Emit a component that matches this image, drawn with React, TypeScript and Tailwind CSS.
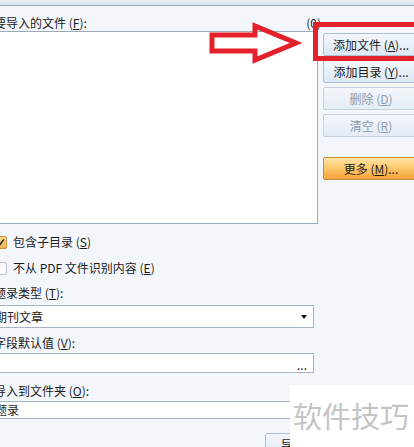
import React from "react";

type BtnProps = {
  children: React.ReactNode;
  disabled?: boolean;
  orange?: boolean;
  className?: string;
};

function DlgButton({ children, disabled, orange, className = "" }: BtnProps) {
  const tone = orange
    ? "border-[#c98d3e] bg-linear-to-b from-[#fde3a6] via-[#fbc768] to-[#f5a23c] text-[#1c1c1c]"
    : disabled
      ? "border-[#c5d1de] bg-linear-to-b from-[#f4f7fb] to-[#e4ecf5] text-[#8d9cb0]"
      : "border-[#b0c0d3] bg-linear-to-b from-[#f3f7fc] to-[#dde8f4] text-[#1c1c1c]";
  return (
    <div
      className={`flex h-[23px] w-[96px] items-center justify-center rounded-[2px] border ${tone} ${className}`}
    >
      {children}
    </div>
  );
}

function Label({ children, className = "" }: { children: React.ReactNode; className?: string }) {
  return <div className={`h-[16px] whitespace-nowrap ${className}`}>{children}</div>;
}

export default function App() {
  return (
    <div className="relative h-[447px] w-[414px] overflow-hidden bg-[#f3f7fc] font-['Noto_Sans_CJK_SC',sans-serif] text-[12px] leading-[16px] text-[#1c1c1c]">
      <div className="h-[6px] border-b border-[#a3adb9] bg-linear-to-b from-[#eaf0f7] to-[#d7e2ef]" />

      <div className="-ml-[6px] flex">
        {/* left column */}
        <div className="flex w-[324px] shrink-0 flex-col">
          <div className="mt-[9px] flex h-[16px] justify-between">
            <span>
              要导入的文件 (<u>F</u>):
            </span>
            <span className="-mr-[3px]">(0)</span>
          </div>
          <div className="h-[193px] border border-[#9ea9b6] bg-white" />

          <div className="mt-[10px] flex h-[16px] items-center gap-[6px]">
            <div className="flex h-[13px] w-[13px] items-center justify-center rounded-[2px] border border-[#c9923a] bg-linear-to-b from-[#fbd98c] to-[#f2b54f]">
              <svg width="9" height="9" viewBox="0 0 9 9">
                <path d="M1.5 4.8 L3.6 7 L7.8 1.6" fill="none" stroke="#2a2a2a" strokeWidth="1.6" />
              </svg>
            </div>
            <span>
              包含子目录 (<u>S</u>)
            </span>
          </div>

          <div className="mt-[10px] flex h-[16px] items-center gap-[6px]">
            <div className="h-[13px] w-[13px] rounded-[2px] border border-[#b9c4d0] bg-linear-to-b from-[#f1f4f8] to-white" />
            <span>
              不从 PDF 文件识别内容 (<u>E</u>)
            </span>
          </div>

          <Label className="mt-[9px]">
            题录类型 (<u>T</u>):
          </Label>
          <div className="mt-[4px] flex h-[23px] w-[320px] items-center justify-between border border-[#a7b5c3] bg-white pr-[6px]">
            <span>期刊文章</span>
            <svg width="6" height="4" viewBox="0 0 6 4">
              <path d="M0 0 H6 L3 4 Z" fill="#111" />
            </svg>
          </div>

          <Label className="mt-[7px]">
            字段默认值 (<u>V</u>):
          </Label>
          <div className="mt-[2px] flex h-[20px] w-[320px] items-end justify-end border border-[#a7b5c3] bg-white pr-[6px]">
            <span className="leading-[14px]">...</span>
          </div>

          <Label className="mt-[10px]">
            导入到文件夹 (<u>O</u>):
          </Label>
          <div className="mt-[2px] flex h-[18px] w-[320px] items-center border border-[#a7b5c3] bg-white">
            <span>题录</span>
          </div>

          <div className="ml-[271px] mt-[14px] flex h-[24px] w-[72px] items-center rounded-[2px] border border-[#b0c0d3] bg-linear-to-b from-[#f3f7fc] to-[#dde8f4] pl-[15px]">
            导入
          </div>
        </div>

        {/* right column */}
        <div className="ml-[5px] flex shrink-0 flex-col gap-[4px] pt-[27px]">
          <DlgButton>
            添加文件 (<u>A</u>)...
          </DlgButton>
          <DlgButton>
            添加目录 (<u>Y</u>)...
          </DlgButton>
          <DlgButton disabled>
            删除 (<u>D</u>)
          </DlgButton>
          <DlgButton disabled>
            清空 (<u>R</u>)
          </DlgButton>
          <DlgButton orange className="mt-[16px] h-[22px]">
            更多 (<u>M</u>)...
          </DlgButton>
        </div>
      </div>

      {/* red annotation */}
      <div className="absolute left-[313px] top-[22px] h-[39px] w-[110px] border-[5px] border-[#e3212b]" />
      <svg className="absolute left-0 top-0" width="414" height="80" viewBox="0 0 414 80">
        <polygon
          points="212,35 255,35 255,26 296,43 255,60 255,51 212,51"
          fill="none"
          stroke="#e3212b"
          strokeWidth="5"
          strokeLinejoin="miter"
        />
      </svg>

      {/* watermark */}
      <div className="absolute left-[290px] top-[385px] h-[62px] w-[124px] bg-white pl-[3px] pt-[15px]">
        <div className="text-[29px] leading-[30px] text-[#c4c4c4]">软件技巧</div>
      </div>
    </div>
  );
}
